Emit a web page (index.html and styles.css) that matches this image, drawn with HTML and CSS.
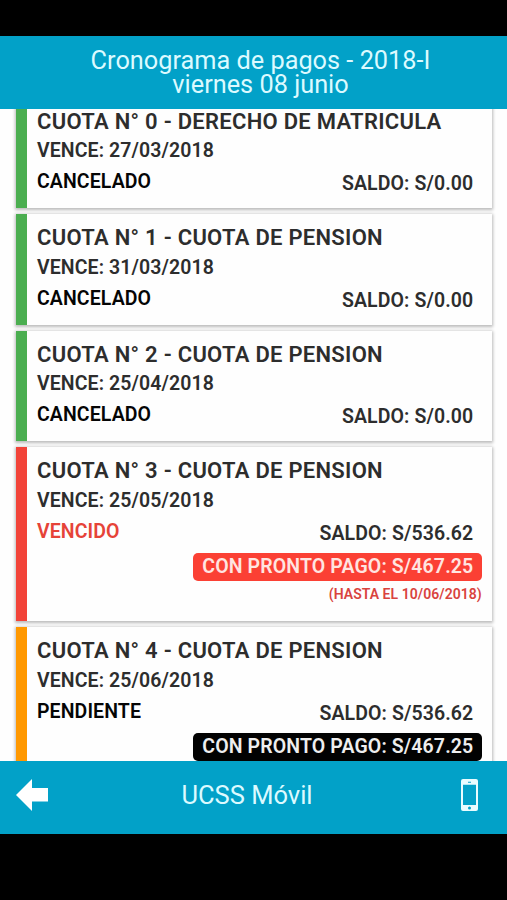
FILE: index.html
```html
<!DOCTYPE html>
<html lang="es">
<head>
<meta charset="utf-8">
<title>UCSS Móvil</title>
<link rel="stylesheet" href="styles.css">
</head>
<body>
<div class="app">
  <header class="bar header">
    <h1>Cronograma de pagos - 2018-I<br>viernes 08 junio</h1>
  </header>
  <main class="list">
    <article class="card paid">
      <h2>CUOTA N° 0 - DERECHO DE MATRICULA</h2>
      <p class="due">VENCE: 27/03/2018</p>
      <div class="row"><span class="status">CANCELADO</span><span class="balance">SALDO: S/0.00</span></div>
    </article>
    <article class="card paid">
      <h2>CUOTA N° 1 - CUOTA DE PENSION</h2>
      <p class="due">VENCE: 31/03/2018</p>
      <div class="row"><span class="status">CANCELADO</span><span class="balance">SALDO: S/0.00</span></div>
    </article>
    <article class="card paid">
      <h2>CUOTA N° 2 - CUOTA DE PENSION</h2>
      <p class="due">VENCE: 25/04/2018</p>
      <div class="row"><span class="status">CANCELADO</span><span class="balance">SALDO: S/0.00</span></div>
    </article>
    <article class="card overdue">
      <h2>CUOTA N° 3 - CUOTA DE PENSION</h2>
      <p class="due">VENCE: 25/05/2018</p>
      <div class="row"><span class="status">VENCIDO</span><span class="balance">SALDO: S/536.62</span></div>
      <p class="promo">CON PRONTO PAGO: S/467.25</p>
      <p class="until">(HASTA EL 10/06/2018)</p>
    </article>
    <article class="card pending">
      <h2>CUOTA N° 4 - CUOTA DE PENSION</h2>
      <p class="due">VENCE: 25/06/2018</p>
      <div class="row"><span class="status">PENDIENTE</span><span class="balance">SALDO: S/536.62</span></div>
      <p class="promo">CON PRONTO PAGO: S/467.25</p>
    </article>
  </main>
  <footer class="bar footer">
    <svg class="back" viewBox="0 0 32 32" width="32" height="32"><path fill="#fff" d="M0 16 16 0V9H32V22.500H16V32Z"/></svg>
    <span class="brand">UCSS Móvil</span>
    <svg class="phone" viewBox="0 0 17 32" width="17" height="32"><path fill="#e9fcff" fill-rule="evenodd" d="M2 0H15Q17 0 17 2V30Q17 32 15 32H2Q0 32 0 30V2Q0 0 2 0ZM2 5.800V26H15V5.800ZM7 2.800V3.800H10V2.800ZM8.500 27.500A1.500 1.500 0 1 0 8.500 30.500A1.500 1.500 0 1 0 8.500 27.500Z"/></svg>
  </footer>
</div>
</body>
</html>
```

FILE: styles.css
```css
* { box-sizing: border-box; }
body { margin: 0; background: #000; font-family: Roboto, "Liberation Sans", sans-serif; }
h1, h2, p { margin: 0; }
.app { height: 900px; padding: 36px 0 66px; display: flex; flex-direction: column; overflow: hidden; }
.bar { background: #02a1c8; color: #dcfaff; flex: none; }
.header { height: 72.500px; padding-top: 13px; text-align: center; }
h1 { font-size: 25.300px; line-height: 24px; font-weight: 400; padding-left: 14px; }
.list { flex: 1; min-height: 0; overflow: hidden; background: #fefefe; padding: 0 15px 0 16px; }
.card {
  height: 110.500px;
  margin-bottom: 6px;
  padding: 10px 18.700px 0 10px;
  border-left: 11.500px solid;
  background: #fefefe;
  box-shadow: 0 1px 3px 1px rgba(0, 0, 0, .27);
  color: #2d2d2d;
  font-weight: 600;
}
.card:first-child { margin-top: -11px; }
.paid { border-color: #4bae50; }
.overdue { border-color: #f24338; height: 174px; }
.pending { border-color: #ff9800; height: 174px; }
h2 { font-size: 22px; line-height: 28px; font-weight: 600; letter-spacing: .28px; white-space: nowrap; }
.due { font-size: 19.500px; line-height: 29px; letter-spacing: .1px; padding-top: .5px; }
.row { display: flex; justify-content: space-between; font-size: 19.500px; line-height: 26px; letter-spacing: .1px; }
.status { padding-top: 4px; color: #050505; }
.overdue .status { color: #e64338; }
.balance { padding-top: 6px; }
.promo {
  width: 289px;
  height: 28px;
  margin: 6.500px -8.500px 0 auto;
  padding-right: 8.500px;
  border-radius: 5px;
  font-size: 19.500px;
  line-height: 27px;
  letter-spacing: .12px;
  text-align: right;
  background: #020202;
  color: #eee;
}
.overdue .promo { background: #fb4034; color: #ffe5e1; }
.until { margin-right: -8.500px; font-size: 14px; line-height: 27px; letter-spacing: .05px; text-align: right; color: #d9433e; }
.footer { height: 73px; padding: 0 29px 6px 16px; display: flex; align-items: center; justify-content: space-between; }
.brand { font-size: 25.500px; margin-right: 15px; }
```
